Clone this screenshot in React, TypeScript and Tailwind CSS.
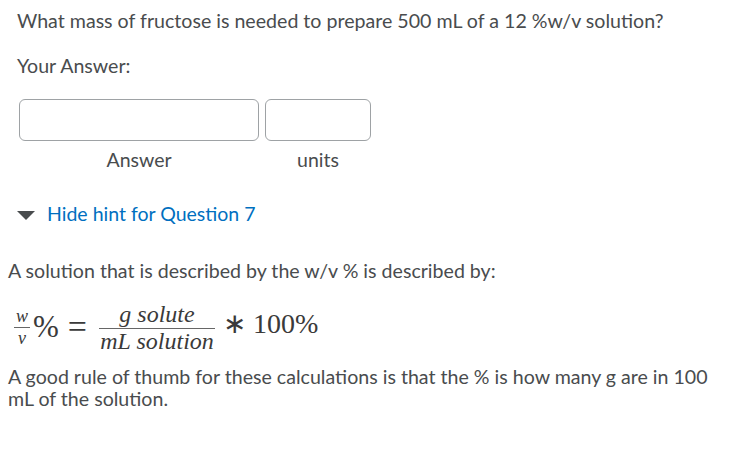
export default function App() {
  return (
    <div className="min-h-screen w-full bg-white font-['Lato',sans-serif] text-[#494c4e]">
      <div className="pl-[17px] pt-[8px]">
        <p className="text-[19.6px] leading-[26px]">
          What mass of fructose is needed to prepare 500 mL of a 12 %w/v solution?
        </p>
        <p className="mt-[19px] text-[19.6px] leading-[26px]">Your Answer:</p>

        <div className="mt-[20px] flex gap-[6px] pl-[2px]">
          <div className="flex w-[240px] flex-col items-center">
            <input
              type="text"
              className="h-[42px] w-full rounded-[6px] border border-[#9ea2a5] bg-white outline-none"
            />
            <span className="mt-[7px] text-[19.5px] leading-[24px]">Answer</span>
          </div>
          <div className="flex w-[106px] flex-col items-center">
            <input
              type="text"
              className="h-[42px] w-full rounded-[6px] border border-[#9ea2a5] bg-white outline-none"
            />
            <span className="mt-[7px] text-[19.5px] leading-[24px]">units</span>
          </div>
        </div>

        <div className="mt-[30px] flex items-center gap-[12px]">
          <svg width="18" height="9" viewBox="0 0 18 9" className="mt-[2px]">
            <path d="M0 0 H18 L9 9 Z" fill="#494c4e" />
          </svg>
          <a className="text-[19.5px] leading-[24px] text-[#006fbf]">Hide hint for Question 7</a>
        </div>
      </div>

      <div className="mt-[33px] pl-[8px] pr-[20px]">
        <p className="text-[19.6px] leading-[24px]">
          A solution that is described by the w/v % is described by:
        </p>

        <div className="mt-[19px] flex h-[50px] items-center pl-[6px] font-['Liberation_Serif',serif] text-[#3a3a3a]">
          <span className="inline-flex flex-col items-center text-[18px] italic leading-[21px]">
            <span>w</span>
            <span className="h-px w-[16px] bg-[#666]" />
            <span>v</span>
          </span>
          <span className="ml-[3px] text-[31px] leading-[30px]">%</span>
          <span className="ml-[9px] text-[34px] leading-[30px]">=</span>
          <span className="ml-[12px] inline-flex flex-col items-center text-[24px] italic leading-[24px]">
            <span className="pb-[2px]">g solute</span>
            <span className="h-px w-[116px] bg-[#666]" />
            <span>mL solution</span>
          </span>
          <span className="ml-[8px] mb-[6px] text-[28px] leading-[30px]">∗ 100%</span>
        </div>

        <p className="mt-[14px] text-[19.6px] leading-[22px]">
          A good rule of thumb for these calculations is that the % is how many g are in 100 mL of the solution.
        </p>
      </div>
    </div>
  );
}
